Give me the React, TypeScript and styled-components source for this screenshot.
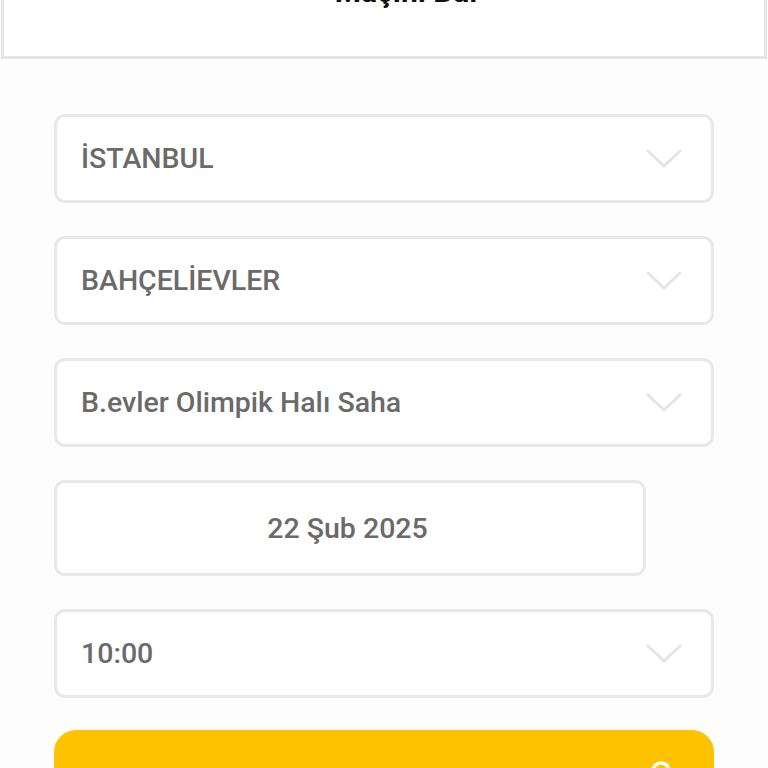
import React from "react";
import styled, { createGlobalStyle } from "styled-components";

const GlobalStyle = createGlobalStyle`
  html, body {
    margin: 0;
    padding: 0;
    background: #fdfdfd;
    font-family: Roboto, "Noto Sans", Arial, sans-serif;
    overflow: hidden;
  }
`;

const Page = styled.div`
  width: 768px;
  height: 768px;
  overflow: hidden;
  display: flex;
  flex-direction: column;
`;

const Header = styled.header`
  box-sizing: border-box;
  height: 100px;
  margin-top: -41px;
  background: #ffffff;
  border: 3px solid #e6e6e6;
  border-top: none;
  margin-left: 1px;
  margin-right: 1px;
  display: flex;
  justify-content: center;
  padding-top: 16px;
  flex-shrink: 0;
`;

const TitleRow = styled.div`
  display: flex;
  align-items: center;
  gap: 22px;
  height: 34px;
  margin-left: 8px;
`;

const Title = styled.h1`
  margin: 0;
  font-size: 30px;
  line-height: 34px;
  font-weight: 700;
  color: #111;
`;

const Form = styled.div`
  display: flex;
  flex-direction: column;
  gap: 33px;
  padding: 55px 54px 0 54px;
`;

const Field = styled.div<{ $width?: number; $height?: number; $center?: boolean }>`
  box-sizing: border-box;
  width: ${(p) => (p.$width ? `${p.$width}px` : "100%")};
  height: ${(p) => p.$height ?? 89}px;
  background: #ffffff;
  border: 3px solid #e8e8e8;
  border-radius: 11px;
  display: flex;
  align-items: center;
  justify-content: ${(p) => (p.$center ? "center" : "space-between")};
  padding: 0 29px 0 24px;
`;

const FieldText = styled.span`
  font-size: 28.5px;
  font-weight: 500;
  color: #6a6a6a;
  letter-spacing: 0px;
`;

const Chevron = styled.svg`
  width: 36px;
  height: 20px;
  flex-shrink: 0;
`;

const SearchButton = styled.button`
  box-sizing: border-box;
  width: 100%;
  height: 80px;
  margin-top: -1px;
  border: none;
  border-radius: 22px;
  background: #ffc200;
  display: flex;
  align-items: flex-start;
  justify-content: flex-end;
  padding: 30px 38px 0 0;
`;

const ChevronIcon = () => (
  <Chevron viewBox="0 0 36 20" fill="none">
    <path d="M2 2 L18 17 L34 2" stroke="#e4e4e4" strokeWidth="3" strokeLinecap="round" strokeLinejoin="round" />
  </Chevron>
);

export default function App() {
  return (
    <>
      <GlobalStyle />
      <Page>
        <Header>
          <TitleRow>
            <svg width="14" height="14" viewBox="0 0 14 14">
              <circle cx="7" cy="7" r="6" fill="#111" />
            </svg>
            <Title>Maçını Bul</Title>
          </TitleRow>
        </Header>
        <Form>
          <Field>
            <FieldText>İSTANBUL</FieldText>
            <ChevronIcon />
          </Field>
          <Field>
            <FieldText>BAHÇELİEVLER</FieldText>
            <ChevronIcon />
          </Field>
          <Field>
            <FieldText>B.evler Olimpik Halı Saha</FieldText>
            <ChevronIcon />
          </Field>
          <Field $width={592} $height={96} $center>
            <FieldText>22 Şub 2025</FieldText>
          </Field>
          <Field>
            <FieldText>10:00</FieldText>
            <ChevronIcon />
          </Field>
          <SearchButton>
            <svg width="26" height="26" viewBox="0 0 26 26" fill="none">
              <circle cx="11" cy="11" r="8" stroke="#ffffff" strokeWidth="3.5" />
              <path d="M17 17 L24 24" stroke="#ffffff" strokeWidth="3.5" strokeLinecap="round" />
            </svg>
          </SearchButton>
        </Form>
      </Page>
    </>
  );
}
